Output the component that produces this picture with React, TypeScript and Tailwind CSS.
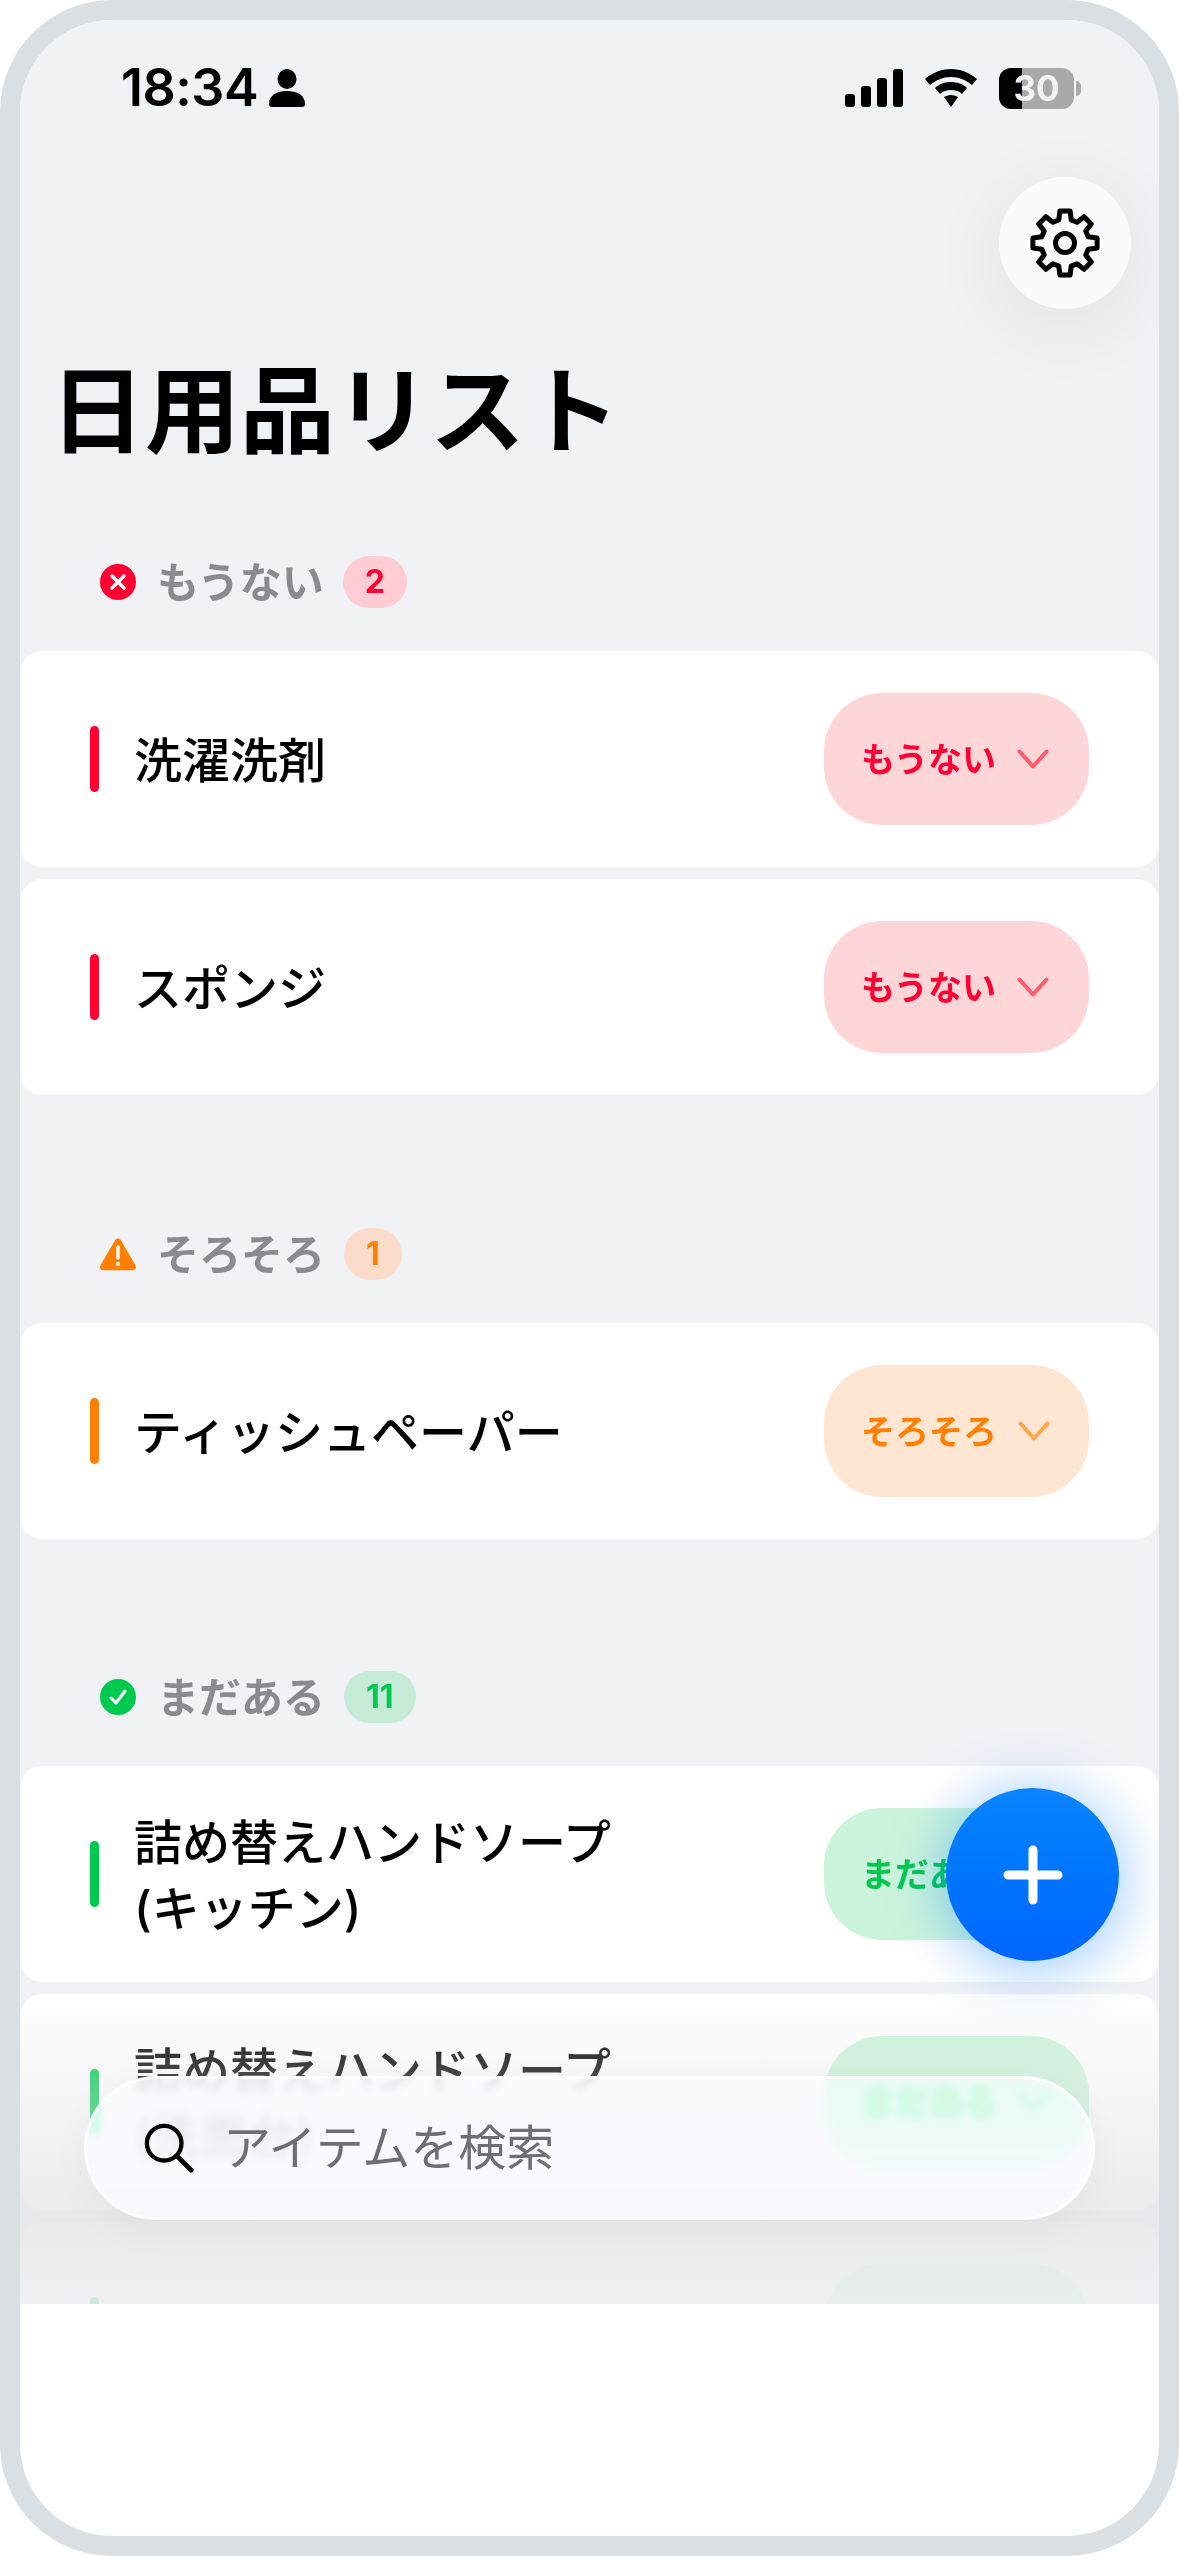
type Status = "out" | "low" | "ok";

const TONES: Record<Status, { bar: string; pill: string; text: string; chevron: string; label: string }> = {
  out: { bar: "bg-[#ff0033]", pill: "bg-[#ffd6d8]", text: "text-[#ff0033]", chevron: "text-[#ff5a6e]", label: "もうない" },
  low: { bar: "bg-[#ff8000]", pill: "bg-[#ffe6d2]", text: "text-[#ff8000]", chevron: "text-[#ffa64d]", label: "そろそろ" },
  ok: { bar: "bg-[#00c950]", pill: "bg-[#ccf4dc]", text: "text-[#00c950]", chevron: "text-[#4dd985]", label: "まだある" },
};

// 8 teeth, one pointing straight up
const GEAR_PATH =
  Array.from({ length: 8 })
    .map((_, i) => {
      const a = i * 45 - 90;
      const pts: [number, number][] = [
        [24, a - 15],
        [32.5, a - 9],
        [32.5, a + 9],
        [24, a + 15],
      ];
      return pts
        .map(([r, d]) => {
          const t = (d * Math.PI) / 180;
          return `${(36 + r * Math.cos(t)).toFixed(2)} ${(36 + r * Math.sin(t)).toFixed(2)}`;
        })
        .join(" L");
    })
    .map((s, i) => (i === 0 ? "M" : "L") + s)
    .join(" ") + " Z";

function SectionHeader({ status, count, badge, icon }: { status: Status; count: number; badge: string; icon: React.ReactNode }) {
  const tone = TONES[status];
  return (
    <div className="flex h-[52px] items-center pl-[79px]">
      <span className="mr-[20px] flex h-[38px] w-[38px] items-center justify-center">{icon}</span>
      <span className="pt-[2px] text-[42px] font-semibold leading-none text-[#8a8b90]">{tone.label}</span>
      <span className={`ml-[19px] flex h-[52px] items-center rounded-[26px] px-[22px] text-[32px] font-bold ${badge} ${tone.text}`}>
        {count}
      </span>
    </div>
  );
}

function ItemRow({ name, status }: { name: string; status: Status }) {
  const tone = TONES[status];
  return (
    <div className="flex h-[216px] items-center justify-between rounded-[22px] bg-white pl-[70px] pr-[70px]">
      <div className="flex items-center">
        <span className={`h-[66px] w-[9px] rounded-full ${tone.bar}`} />
        <span className="ml-[35px] max-w-[500px] pt-[3px] text-[48px] font-medium leading-[66px] text-black">{name}</span>
      </div>
      <div className={`flex h-[132px] w-[265px] items-center rounded-[58px] pl-[37px] ${tone.pill}`}>
        <span className={`pt-[2px] text-[34px] font-semibold leading-none ${tone.text}`}>{tone.label}</span>
        <svg className={`ml-[21px] ${tone.chevron}`} width="32" height="20" viewBox="0 0 32 20" fill="none">
          <path d="M2.500 2.500 16 17.500 29.500 2.500" stroke="currentColor" strokeWidth="4" strokeLinecap="round" strokeLinejoin="round" />
        </svg>
      </div>
    </div>
  );
}

function StatusBar() {
  return (
    <div className="flex items-center justify-between pl-[101px] pr-[78px] pt-[47px]">
      <div className="flex items-center">
        <span className="text-[52px] font-semibold leading-[42px] tracking-[-0.5px] text-black">18:34</span>
        <svg className="ml-[11px]" width="36" height="38" viewBox="0 0 36 38" fill="black">
          <ellipse cx="18" cy="10" rx="9.500" ry="10" />
          <path d="M0 35c0-9 8-13 18-13s18 4 18 13c0 2-1 3-3 3H3c-2 0-3-1-3-3z" />
        </svg>
      </div>
      <div className="flex items-center">
        <svg width="58" height="38" viewBox="0 0 58 38" fill="black">
          <rect x="0" y="25" width="10" height="13" rx="3" />
          <rect x="16" y="17" width="10" height="21" rx="3" />
          <rect x="32" y="9" width="10" height="29" rx="3" />
          <rect x="48" y="0" width="10" height="38" rx="3" />
        </svg>
        <svg className="ml-[22px]" width="52" height="38" viewBox="0 0 52 38" fill="black">
          <path d="M26 0c10 0 19 4 26 10l-5 6C41 11 34 8 26 8S11 11 5 16l-5-6C7 4 16 0 26 0z" />
          <path d="M26 13c6 0 12 2 16 6l-5 6c-3-3-7-4-11-4s-8 1-11 4l-5-6c4-4 10-6 16-6z" />
          <path d="M26 26c3 0 5 1 7 2L26 38l-7-10c2-1 4-2 7-2z" />
        </svg>
        <div className="relative ml-[22px] flex h-[41px] w-[75px] rounded-[12px] bg-[#a9a9ad]">
          <span className="h-full w-[23px] rounded-l-[12px] bg-black" />
          <span className="absolute inset-0 flex items-center justify-center text-[35px] font-bold leading-none text-[#f1f2f6]">30</span>
        </div>
        <span className="ml-[2px] h-[15px] w-[5px] rounded-r-full bg-[#a9a9ad]" />
      </div>
    </div>
  );
}

export default function App() {
  return (
    <div className="h-[2556px] w-[1179px] overflow-hidden rounded-[112px] bg-[#d9dfe3] p-[20px] font-['Inter','Noto_Sans_CJK_JP',sans-serif]">
      <div className="relative h-[2516px] w-[1139px] overflow-hidden rounded-[92px] bg-white">
        <div className="relative h-[2284px] overflow-hidden bg-[#f1f2f6]">
          <StatusBar />

          <div className="mt-[68px] flex justify-end pr-[28px]">
            <button className="flex h-[132px] w-[132px] items-center justify-center rounded-full bg-[#fafaff] shadow-[0_16px_80px_rgba(0,0,0,0.07)]">
              <svg width="72" height="72" viewBox="0 0 72 72" fill="none" stroke="black" strokeWidth="5" strokeLinejoin="round">
                <path d={GEAR_PATH} />
                <circle cx="36" cy="36" r="9.500" />
              </svg>
            </button>
          </div>

          <h1 className="ml-[30px] mt-[37px] text-[95px] font-bold leading-[132px] text-black">日用品リスト</h1>

          <section className="mt-[78px]">
            <SectionHeader
              status="out"
              count={2}
              badge="bg-[#ffccd3]"
              icon={
                <svg width="36" height="36" viewBox="0 0 36 36">
                  <circle cx="18" cy="18" r="18" fill="#ff0033" />
                  <path d="M12 12l12 12M24 12 12 24" stroke="white" strokeWidth="3.400" strokeLinecap="round" />
                </svg>
              }
            />
            <div className="mt-[43px] flex flex-col gap-[12px]">
              <ItemRow name="洗濯洗剤" status="out" />
              <ItemRow name="スポンジ" status="out" />
            </div>
          </section>

          <section className="mt-[133px]">
            <SectionHeader
              status="low"
              count={1}
              badge="bg-[#fbdccb]"
              icon={
                <svg width="38" height="34" viewBox="0 0 38 34">
                  <path d="M19 1.500c1.200 0 2.200.6 2.900 1.800l14.600 25c1.300 2.400-.2 5-3 5H4.500c-2.800 0-4.300-2.600-3-5l14.600-25C16.800 2.100 17.800 1.500 19 1.500z" fill="#ff8000" />
                  <path d="M19 10v11" stroke="white" strokeWidth="3.400" strokeLinecap="round" />
                  <circle cx="19" cy="27" r="2" fill="white" />
                </svg>
              }
            />
            <div className="mt-[43px]">
              <ItemRow name="ティッシュペーパー" status="low" />
            </div>
          </section>

          <section className="mt-[132px]">
            <SectionHeader
              status="ok"
              count={11}
              badge="bg-[#c5ebd7]"
              icon={
                <svg width="36" height="36" viewBox="0 0 36 36">
                  <circle cx="18" cy="18" r="18" fill="#00c950" />
                  <path d="M11 19l5 5 9-12" fill="none" stroke="white" strokeWidth="3" strokeLinecap="round" strokeLinejoin="round" />
                </svg>
              }
            />
            <div className="mt-[43px] flex flex-col gap-[12px]">
              <ItemRow name="詰め替えハンドソープ(キッチン)" status="ok" />
              <ItemRow name="詰め替えハンドソープ(洗面台)" status="ok" />
              <ItemRow name="" status="ok" />
            </div>
          </section>

          <div className="pointer-events-none absolute inset-x-0 bottom-0 h-[314px] bg-gradient-to-b from-[#e8e8ec00] via-[#e7e7ebdc] via-75% to-[#edeef2dc]" />
        </div>

        <button className="absolute left-[926px] top-[1768px] flex h-[173px] w-[173px] items-center justify-center rounded-full bg-gradient-to-b from-[#0a84ff] to-[#0066ff] shadow-[0_6px_60px_rgba(0,122,255,0.45)]">
          <svg width="60" height="60" viewBox="0 0 60 60">
            <path d="M30 5v50M5 30h50" stroke="white" strokeWidth="9" strokeLinecap="round" />
          </svg>
        </button>

        <div className="absolute left-[64px] top-[2056px] flex h-[144px] w-[1011px] items-center rounded-[72px] border-[3px] border-white/90 bg-[#fbfaff]/85 pl-[57px] shadow-[0_10px_40px_rgba(0,0,0,0.04)] backdrop-blur-[4px] backdrop-saturate-[5]">
          <svg width="50" height="50" viewBox="0 0 52 52" fill="none">
            <circle cx="21" cy="21" r="18" stroke="black" strokeWidth="4.500" />
            <path d="M34.500 34.500 49 49" stroke="black" strokeWidth="5" strokeLinecap="round" />
          </svg>
          <span className="ml-[29px] text-[48px] leading-none text-[#6e6e73]">アイテムを検索</span>
        </div>
      </div>
    </div>
  );
}
